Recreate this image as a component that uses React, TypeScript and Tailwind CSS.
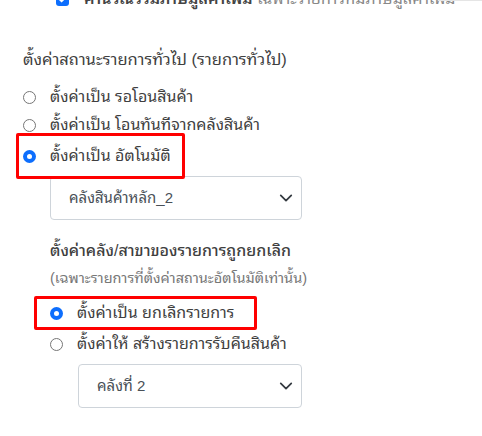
import React from 'react';

function Radio({ checked }: { checked?: boolean }) {
  return checked ? (
    <span className="w-[13px] h-[13px] rounded-full bg-[#0d6efd] flex items-center justify-center shrink-0">
      <span className="w-[5px] h-[5px] rounded-full bg-white" />
    </span>
  ) : (
    <span className="w-[13px] h-[13px] rounded-full border border-[#767676] bg-white shrink-0" />
  );
}

function Chevron() {
  return (
    <svg width="14" height="14" viewBox="0 0 16 16" fill="none">
      <path d="M2 5l6 6 6-6" stroke="#343a40" strokeWidth="2" strokeLinecap="round" strokeLinejoin="round" />
    </svg>
  );
}

function SelectBox({ label, className }: { label: string; className: string }) {
  return (
    <div className={`flex items-center justify-between h-[44px] rounded-[4px] border border-[#ced4da] bg-white pl-[18px] pr-[8px] ${className}`}>
      <span className="text-[15px] text-[#495057]">{label}</span>
      <Chevron />
    </div>
  );
}

export default function App() {
  return (
    <div className="w-[482px] h-[436px] bg-white overflow-hidden relative text-[#3f3f3f] font-['Liberation_Sans','Noto_Sans_Thai_Looped',sans-serif]">
      <div className="absolute top-0 right-0 w-[44px] h-px bg-[#e5e5e5]" />

      {/* clipped checkbox row */}
      <div className="flex items-center gap-[15px] pl-[56px] -mt-[8px] h-[14px]">
        <span className="w-[13px] h-[13px] rounded-[3px] bg-[#0d6efd] flex items-center justify-center">
          <svg width="9" height="9" viewBox="0 0 10 10">
            <path d="M2 5l2 2 4-4" stroke="white" strokeWidth="2" fill="none" />
          </svg>
        </span>
        <span className="text-[16px] whitespace-nowrap leading-none">
          <span className="font-semibold text-[#444]">คำนวณรวมภาษีมูลค่าเพิ่ม</span>{' '}
          <span className="text-[#888]">เฉพาะรายการที่มีภาษีมูลค่าเพิ่ม</span>
        </span>
      </div>

      <div className="pl-[23px] pt-[41px]">
        <div className="text-[16.5px] leading-[24px]">ตั้งค่าสถานะรายการทั่วไป (รายการทั่วไป)</div>

        <div className="mt-[13px] flex flex-col">
          <label className="flex items-center gap-[14px] h-[26px]">
            <Radio />
            <span className="text-[16px]">ตั้งค่าเป็น รอโอนสินค้า</span>
          </label>
          <label className="flex items-center gap-[14px] h-[30px]">
            <Radio />
            <span className="text-[16px]">ตั้งค่าเป็น โอนทันทีจากคลังสินค้า</span>
          </label>
          <label className="flex items-center gap-[14px] h-[46px] -mt-[7px] -ml-[7px] pl-[4px] w-[169px] border-[3px] border-[#ff0000] rounded-[2px]">
            <Radio checked />
            <span className="text-[16px]">ตั้งค่าเป็น อัตโนมัติ</span>
          </label>
        </div>

        <SelectBox label="คลังสินค้าหลัก_2" className="ml-[27px] w-[252px] -mt-[3px]" />

        <div className="ml-[27px] mt-[19px]">
          <div className="text-[16px] font-medium leading-[24px]">ตั้งค่าคลัง/สาขาของรายการถูกยกเลิก</div>
          <div className="text-[14.5px] text-[#777] leading-[20px] mt-[5px]">(เฉพาะรายการที่ตั้งค่าสถานะอัตโนมัติเท่านั้น)</div>

          <div className="mt-[8px] flex flex-col">
            <label className="flex items-center gap-[14px] h-[34px] -ml-[16px] pl-[13px] w-[223px] border-[3px] border-[#ff0000] rounded-[2px]">
              <Radio checked />
              <span className="text-[16px]">ตั้งค่าเป็น ยกเลิกรายการ</span>
            </label>
            <label className="flex items-center gap-[14px] h-[28px]">
              <Radio />
              <span className="text-[16px]">ตั้งค่าให้ สร้างรายการรับคืนสินค้า</span>
            </label>
          </div>

          <SelectBox label="คลังที่ 2" className="ml-[28px] w-[224px] mt-[6px]" />
        </div>
      </div>
    </div>
  );
}
